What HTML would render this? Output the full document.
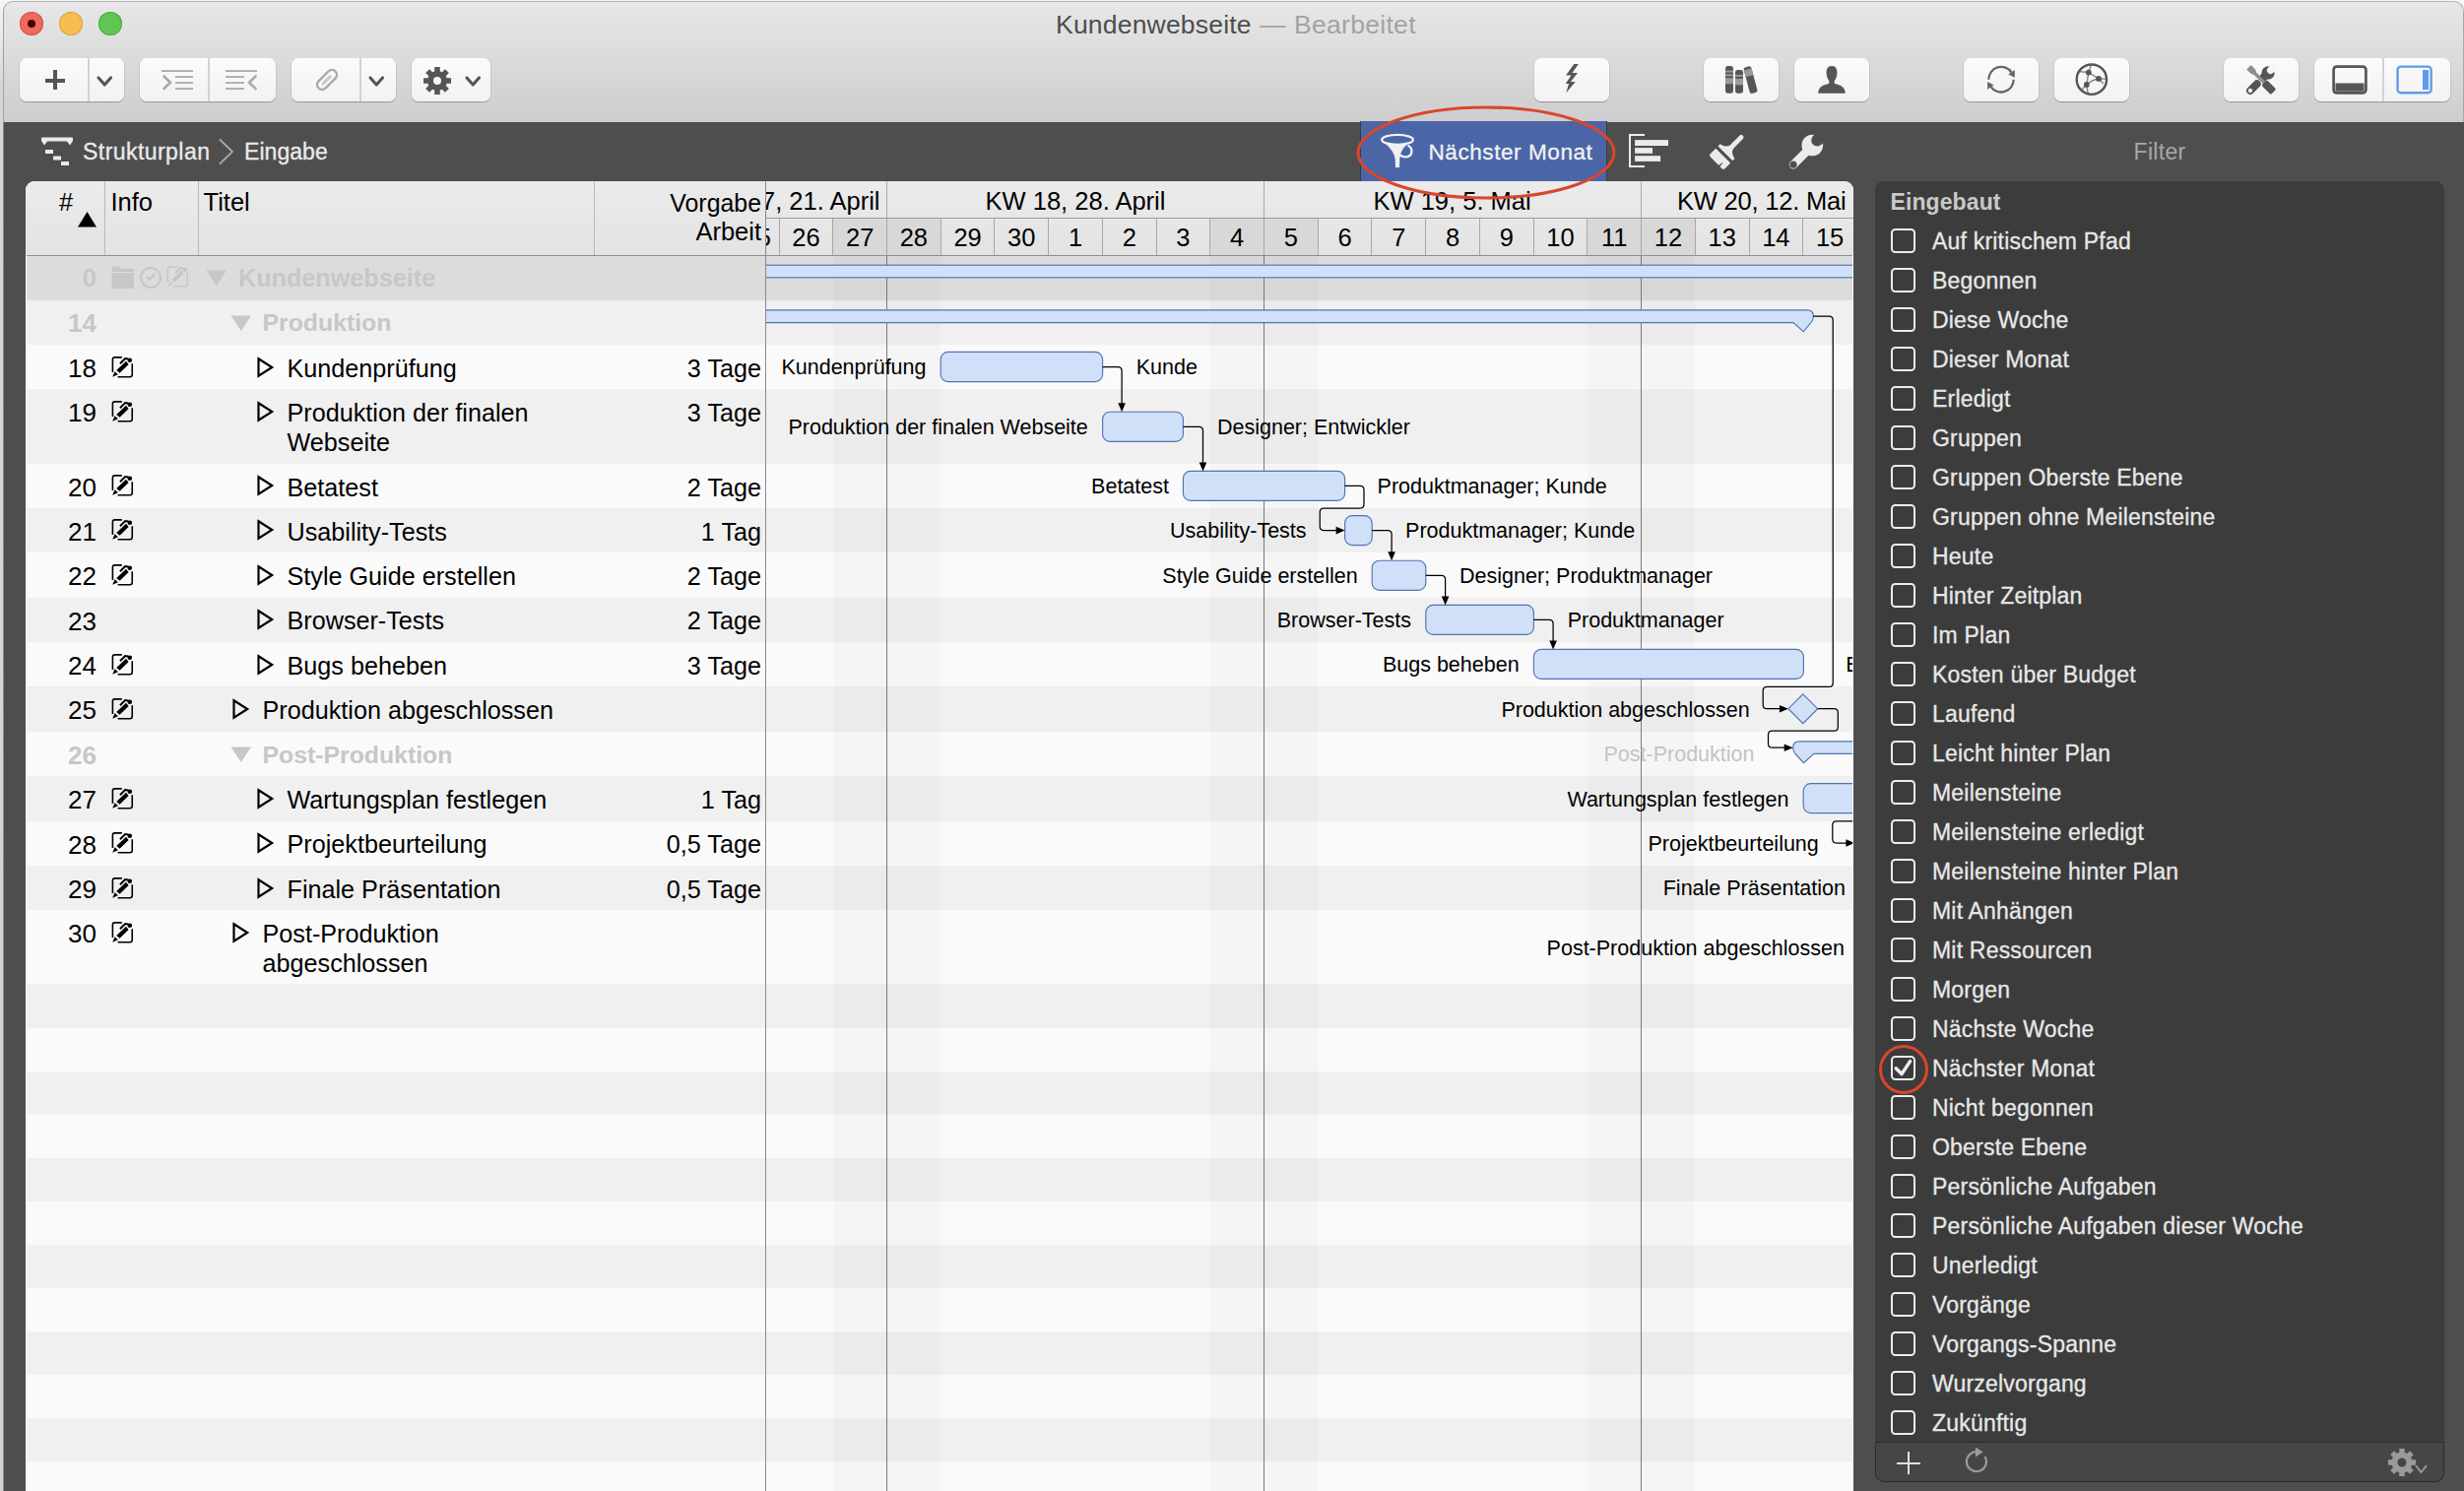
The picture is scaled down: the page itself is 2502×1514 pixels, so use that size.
<!DOCTYPE html><html><head><meta charset="utf-8"><style>
html,body{margin:0;padding:0;}
body{width:2502px;height:1514px;position:relative;overflow:hidden;background:#d6d6d6;font-family:"Liberation Sans",sans-serif;}
.t{position:absolute;white-space:nowrap;line-height:1;}
.r{position:absolute;}
.clip{position:absolute;overflow:hidden;}

</style></head><body>
<div class="r" style="left:0.00px;top:0.00px;width:2502.00px;height:1514.00px;background:linear-gradient(#f6f6f6 0px,#d6d6d6 90px,#d2d2d2 100%);"></div>
<div class="r" style="left:3.00px;top:1.00px;width:2499.00px;height:124.00px;background:linear-gradient(#e7e7e7,#cdcdcd);border-top:1px solid #b4b4b4;border-left:1px solid #a0a0a0;border-right:1px solid #a8a8a8;border-radius:10px 10px 0 0;box-sizing:border-box;"></div>
<div class="r" style="left:3.00px;top:124.00px;width:2499.00px;height:1390.00px;background:#4e4e4e;border-left:1px solid #8a8a8a;box-sizing:border-box;"></div>
<div class="r" style="left:20px;top:12px;width:24px;height:24px;border-radius:50%;background:#ee6a5e;box-shadow:inset 0 0 0 1px #d25447;"></div>
<div class="r" style="left:60px;top:12px;width:24px;height:24px;border-radius:50%;background:#f5be4f;box-shadow:inset 0 0 0 1px #d9a23d;"></div>
<div class="r" style="left:100px;top:12px;width:24px;height:24px;border-radius:50%;background:#61c554;box-shadow:inset 0 0 0 1px #4ea942;"></div>
<div class="r" style="left:28px;top:20px;width:8px;height:8px;border-radius:50%;background:#4a0002;"></div>
<div class="t" style="top:11.56px;font-size:26.5px;color:#4d4d4d;font-weight:normal;letter-spacing:0.2px;left:1072.00px;">Kundenwebseite</div>
<div class="t" style="top:11.56px;font-size:26.5px;color:#a3a3a3;font-weight:normal;left:1279.00px;">—</div>
<div class="t" style="top:11.56px;font-size:26.5px;color:#a3a3a3;font-weight:normal;letter-spacing:0.3px;left:1314.00px;">Bearbeitet</div>
<div class="r" style="left:20px;top:59px;width:106px;height:44px;box-sizing:border-box;border-radius:7px;background:linear-gradient(#fbfbfb,#f2f2f2);box-shadow:0 0.5px 0 0.5px rgba(0,0,0,0.12), 0 1px 1px rgba(0,0,0,0.18);"></div>
<div class="r" style="left:89.00px;top:59.00px;width:1.50px;height:44.00px;background:#d2d2d2;"></div>
<div class="r" style="left:142px;top:59px;width:138px;height:44px;box-sizing:border-box;border-radius:7px;background:linear-gradient(#fbfbfb,#f2f2f2);box-shadow:0 0.5px 0 0.5px rgba(0,0,0,0.12), 0 1px 1px rgba(0,0,0,0.18);"></div>
<div class="r" style="left:211.00px;top:59.00px;width:1.50px;height:44.00px;background:#d2d2d2;"></div>
<div class="r" style="left:296px;top:59px;width:106px;height:44px;box-sizing:border-box;border-radius:7px;background:linear-gradient(#fbfbfb,#f2f2f2);box-shadow:0 0.5px 0 0.5px rgba(0,0,0,0.12), 0 1px 1px rgba(0,0,0,0.18);"></div>
<div class="r" style="left:365.00px;top:59.00px;width:1.50px;height:44.00px;background:#d2d2d2;"></div>
<div class="r" style="left:418px;top:59px;width:80px;height:44px;box-sizing:border-box;border-radius:7px;background:linear-gradient(#fbfbfb,#f2f2f2);box-shadow:0 0.5px 0 0.5px rgba(0,0,0,0.12), 0 1px 1px rgba(0,0,0,0.18);"></div>
<div class="r" style="left:1558px;top:59px;width:76px;height:44px;box-sizing:border-box;border-radius:7px;background:linear-gradient(#fbfbfb,#f2f2f2);box-shadow:0 0.5px 0 0.5px rgba(0,0,0,0.12), 0 1px 1px rgba(0,0,0,0.18);"></div>
<div class="r" style="left:1730px;top:59px;width:76px;height:44px;box-sizing:border-box;border-radius:7px;background:linear-gradient(#fbfbfb,#f2f2f2);box-shadow:0 0.5px 0 0.5px rgba(0,0,0,0.12), 0 1px 1px rgba(0,0,0,0.18);"></div>
<div class="r" style="left:1822px;top:59px;width:76px;height:44px;box-sizing:border-box;border-radius:7px;background:linear-gradient(#fbfbfb,#f2f2f2);box-shadow:0 0.5px 0 0.5px rgba(0,0,0,0.12), 0 1px 1px rgba(0,0,0,0.18);"></div>
<div class="r" style="left:1994px;top:59px;width:76px;height:44px;box-sizing:border-box;border-radius:7px;background:linear-gradient(#fbfbfb,#f2f2f2);box-shadow:0 0.5px 0 0.5px rgba(0,0,0,0.12), 0 1px 1px rgba(0,0,0,0.18);"></div>
<div class="r" style="left:2086px;top:59px;width:76px;height:44px;box-sizing:border-box;border-radius:7px;background:linear-gradient(#fbfbfb,#f2f2f2);box-shadow:0 0.5px 0 0.5px rgba(0,0,0,0.12), 0 1px 1px rgba(0,0,0,0.18);"></div>
<div class="r" style="left:2258px;top:59px;width:76px;height:44px;box-sizing:border-box;border-radius:7px;background:linear-gradient(#fbfbfb,#f2f2f2);box-shadow:0 0.5px 0 0.5px rgba(0,0,0,0.12), 0 1px 1px rgba(0,0,0,0.18);"></div>
<div class="r" style="left:2350px;top:59px;width:138px;height:44px;box-sizing:border-box;border-radius:7px;background:linear-gradient(#fbfbfb,#f2f2f2);box-shadow:0 0.5px 0 0.5px rgba(0,0,0,0.12), 0 1px 1px rgba(0,0,0,0.18);"></div>
<div class="r" style="left:2419.00px;top:59.00px;width:1.50px;height:44.00px;background:#d2d2d2;"></div>
<div class="r" style="left:45.50px;top:79.50px;width:20.00px;height:4.50px;background:#555555;"></div>
<div class="r" style="left:53.50px;top:71.00px;width:4.50px;height:20.00px;background:#555555;"></div>
<svg class="r" style="left:96.75px;top:75.50px;" width="18.5" height="13" viewBox="0 0 18.5 13"><polyline points="3,3 9.25,10 15.5,3" fill="none" stroke="#555555" stroke-width="3.1" stroke-linecap="round" stroke-linejoin="round"/></svg>
<svg class="r" style="left:372.75px;top:75.50px;" width="18.5" height="13" viewBox="0 0 18.5 13"><polyline points="3,3 9.25,10 15.5,3" fill="none" stroke="#555555" stroke-width="3.1" stroke-linecap="round" stroke-linejoin="round"/></svg>
<svg class="r" style="left:471.25px;top:75.50px;" width="18.5" height="13" viewBox="0 0 18.5 13"><polyline points="3,3 9.25,10 15.5,3" fill="none" stroke="#555555" stroke-width="3.1" stroke-linecap="round" stroke-linejoin="round"/></svg>
<svg class="r" style="left:160.00px;top:68.00px;" width="40" height="28" viewBox="0 0 40 28"><rect x="4" y="3.2" width="32" height="1.8" fill="#a9a9a9"/><rect x="18" y="9.2" width="18" height="1.8" fill="#a9a9a9"/><rect x="18" y="15.2" width="18" height="1.8" fill="#a9a9a9"/><rect x="18" y="21.2" width="18" height="1.8" fill="#a9a9a9"/><polyline points="6.5,9.5 13,15.8 6.5,22" fill="none" stroke="#a9a9a9" stroke-width="2.6" stroke-linecap="round"/></svg>
<svg class="r" style="left:226.00px;top:68.00px;" width="40" height="28" viewBox="0 0 40 28"><rect x="3" y="3.2" width="32" height="1.8" fill="#a9a9a9"/><rect x="3" y="9.2" width="19" height="1.8" fill="#a9a9a9"/><rect x="3" y="15.2" width="19" height="1.8" fill="#a9a9a9"/><rect x="3" y="21.2" width="19" height="1.8" fill="#a9a9a9"/><polyline points="33.5,9.5 27,15.8 33.5,22" fill="none" stroke="#a9a9a9" stroke-width="2.6" stroke-linecap="round"/></svg>
<svg class="r" style="left:316.00px;top:66.00px;" width="32" height="30" viewBox="0 0 32 30"><g transform="rotate(-45 16 15)"><rect x="4" y="10" width="24" height="10" rx="5" fill="none" stroke="#a9a9a9" stroke-width="2.4"/><rect x="9" y="13.5" width="13" height="3" rx="1.5" fill="#c8c8c8"/></g></svg>
<svg class="r" style="left:429.00px;top:67.00px;" width="30" height="30" viewBox="0 0 30 30"><circle cx="15" cy="15" r="10" fill="#555555"/><rect x="12.25" y="1" width="5.5" height="14" fill="#555555" transform="rotate(0.0 15 15)"/><rect x="12.25" y="1" width="5.5" height="14" fill="#555555" transform="rotate(45.0 15 15)"/><rect x="12.25" y="1" width="5.5" height="14" fill="#555555" transform="rotate(90.0 15 15)"/><rect x="12.25" y="1" width="5.5" height="14" fill="#555555" transform="rotate(135.0 15 15)"/><rect x="12.25" y="1" width="5.5" height="14" fill="#555555" transform="rotate(180.0 15 15)"/><rect x="12.25" y="1" width="5.5" height="14" fill="#555555" transform="rotate(225.0 15 15)"/><rect x="12.25" y="1" width="5.5" height="14" fill="#555555" transform="rotate(270.0 15 15)"/><rect x="12.25" y="1" width="5.5" height="14" fill="#555555" transform="rotate(315.0 15 15)"/><circle cx="15" cy="15" r="4" fill="#f6f6f6"/></svg>
<svg class="r" style="left:1580.00px;top:60.00px;" width="30" height="40" viewBox="0 0 30 40"><path d="M18.3,5.1 L22.9,5.1 L16.4,14 L21.9,14 L14.9,23.1 L19.7,23.1 L10.3,34.3 L13,25 L9.7,25 L15.5,16.4 L10,16.4 Z" fill="#555555"/></svg>
<svg class="r" style="left:1750.00px;top:60.00px;" width="40" height="40" viewBox="0 0 40 40"><rect x="2" y="7.1" width="8" height="27.6" rx="2.6" fill="#555555"/><rect x="12" y="11" width="8" height="23.7" rx="2.6" fill="#555555"/><rect x="2" y="11.6" width="8" height="1.9" fill="#9a9a9a"/><rect x="2" y="15.4" width="8" height="1.9" fill="#9a9a9a"/><rect x="2" y="19.2" width="8" height="6" fill="#9a9a9a"/><rect x="12" y="15.9" width="8" height="1.9" fill="#9a9a9a"/><rect x="12" y="19.8" width="8" height="6.5" fill="#9a9a9a"/><g transform="rotate(-15 27.5 21)"><rect x="23.5" y="7.3" width="8" height="27.6" rx="2.6" fill="#555555"/><rect x="23.5" y="10" width="8" height="7" fill="#9a9a9a"/></g></svg>
<svg class="r" style="left:1844.00px;top:60.00px;" width="32" height="40" viewBox="0 0 32 40"><path d="M16,7 C11.6,7 10.4,10.5 10.6,14.5 C10.8,18 12,20.5 13.3,22.2 L13.3,24.8 C7.5,26.5 2.3,27.8 2.3,34.7 L29.7,34.7 C29.7,27.8 24.5,26.5 18.7,24.8 L18.7,22.2 C20,20.5 21.2,18 21.4,14.5 C21.6,10.5 20.4,7 16,7 Z" fill="#555555"/></svg>
<svg class="r" style="left:2010.00px;top:60.00px;" width="44" height="42" viewBox="0 0 44 42"><path d="M9.3,20.7 A12.7,12.7 0 0 1 32.6,13.6" fill="none" stroke="#666" stroke-width="2.3"/><path d="M34.7,20.7 A12.7,12.7 0 0 1 11.4,27.8" fill="none" stroke="#666" stroke-width="2.3"/><path d="M35.9,10.9 L35.9,18.7 L29.2,15.6 Z" fill="#666"/><path d="M8.1,23.1 L8.1,30.9 L14.6,26.2 Z" fill="#666"/></svg>
<svg class="r" style="left:2100.00px;top:60.00px;" width="48" height="42" viewBox="0 0 48 42"><path d="M20.8,13.6 L23.4,6 M20.8,13.6 L12,12.8 M20.8,13.6 L31,19.9 M20.8,13.6 L18.8,25.9 M31,19.9 L38,19.9 M31,19.9 L36,25 M18.8,25.9 Q24,21 31,19.9 M18.8,25.9 L20.2,35 M18.8,25.9 L14,31" stroke="#8a8a8a" stroke-width="1.5" fill="none"/><circle cx="23.9" cy="20.7" r="15.2" fill="none" stroke="#555555" stroke-width="2.4"/><circle cx="20.8" cy="13.6" r="2.9" fill="#555555"/><circle cx="31" cy="19.9" r="2.9" fill="#555555"/><circle cx="18.8" cy="25.9" r="2.9" fill="#555555"/></svg>
<svg class="r" style="left:2270.00px;top:60.00px;" width="50" height="40" viewBox="0 0 50 40"><g transform="translate(15,32) rotate(-45)"><rect x="-3.9" y="-3.9" width="17.4" height="7.8" rx="3.9" fill="#555555"/><circle cx="0" cy="0" r="2.1" fill="#f7f7f7"/><rect x="15.8" y="-4" width="7" height="8" fill="#555555"/><circle cx="25.5" cy="0" r="6.6" fill="#555555"/><circle cx="29" cy="0" r="3.6" fill="#f7f7f7"/><rect x="29" y="-3.6" width="8" height="7.2" fill="#f7f7f7"/></g><g transform="translate(13.5,8.3) rotate(45)"><path d="M0,-2.9 Q0,-3.1 1,-3.1 L6.5,-3.1 L9,-1.8 L23,-1.8 L23,1.8 L9,1.8 L6.5,3.1 L1,3.1 Q0,3.1 0,2.9 Z" fill="#8e8e8e"/><rect x="22" y="-3.9" width="13.5" height="7.8" rx="1.6" fill="#555555"/></g></svg>
<svg class="r" style="left:2368.00px;top:66.00px;" width="36" height="30" viewBox="0 0 36 30"><rect x="1.6" y="1.6" width="32.8" height="26.8" rx="3.2" fill="none" stroke="#555555" stroke-width="2.7"/><rect x="3.5" y="18.5" width="29" height="8.2" fill="#555555"/></svg>
<svg class="r" style="left:2433.00px;top:66.00px;" width="38" height="30" viewBox="0 0 38 30"><rect x="1.6" y="1.6" width="34" height="26.6" rx="3.2" fill="none" stroke="#5d9cec" stroke-width="2.4"/><rect x="27" y="5" width="6" height="20" fill="#5d9cec"/></svg>
<svg class="r" style="left:40.00px;top:138.00px;" width="36" height="32" viewBox="0 0 36 32"><path d="M2,2.5 Q2,1.5 3,1.5 L33,1.5 Q34,1.5 34,2.5 L34,5 L31,9.5 L28,5.5 L8,5.5 L5,9.5 L2,5 Z" fill="#ebebeb"/><rect x="6" y="14" width="8" height="4" fill="#ebebeb"/><rect x="14" y="20.5" width="8" height="4" fill="#ebebeb"/><rect x="22" y="26" width="8" height="4" fill="#ebebeb"/></svg>
<div class="t" style="top:142.53px;font-size:23px;color:#ebebeb;font-weight:normal;letter-spacing:0.45px;left:84.00px;-webkit-text-stroke:0.3px #ebebeb;">Strukturplan</div>
<svg class="r" style="left:221.00px;top:140.00px;" width="18" height="28" viewBox="0 0 18 28"><polyline points="2,1.5 15,14 2,26.5" fill="none" stroke="#a8a8a8" stroke-width="1.8"/></svg>
<div class="t" style="top:142.53px;font-size:23px;color:#ebebeb;font-weight:normal;letter-spacing:0.05px;left:248.00px;-webkit-text-stroke:0.3px #ebebeb;">Eingabe</div>
<div class="r" style="left:1382.00px;top:123.00px;width:249.00px;height:61.00px;background:#4a66a6;box-shadow:-1px 0 0 #3a3a3a, 1px 0 0 #3a3a3a;"></div>
<svg class="r" style="left:1395.00px;top:128.00px;" width="50" height="50" viewBox="0 0 50 50"><path d="M8.5,15 C12,18 20,19.5 24,19.3 C29,19.3 33,18.2 36,16.8 C31,21 27,25 26.3,33 L26.1,42 L21.9,42 L21.7,33.5 C20.5,25 14,20 8.5,15 Z" fill="#f0f0f0"/><ellipse cx="24" cy="13.9" rx="15.8" ry="5" fill="none" stroke="#f0f0f0" stroke-width="2.3"/><path d="M34.5,19.8 C39.8,22 39.8,30 34,31.2 C31,31.8 28.5,31 26.5,29.5" fill="none" stroke="#f0f0f0" stroke-width="2.3"/></svg>
<div class="t" style="top:144.45px;font-size:22.5px;color:#f2f2f2;font-weight:normal;letter-spacing:0.58px;left:1450.50px;-webkit-text-stroke:0.3px #f2f2f2;">Nächster Monat</div>
<svg class="r" style="left:1645.00px;top:128.00px;" width="60" height="50" viewBox="0 0 60 50"><path d="M25,9 L10,9 L10,40.9 L25,40.9" fill="none" stroke="#ededed" stroke-width="2"/><rect x="15.1" y="14.1" width="33.9" height="5.9" fill="#ebebeb"/><rect x="15.1" y="22.1" width="17.9" height="5.7" fill="#ebebeb"/><rect x="15.1" y="30.2" width="26" height="5.7" fill="#ebebeb"/></svg>
<svg class="r" style="left:1725.00px;top:128.00px;" width="56" height="50" viewBox="0 0 56 50"><g transform="translate(27.5,27) rotate(45)" fill="#ebebeb"><rect x="-2.4" y="-24.5" width="4.8" height="17" rx="2.4"/><path d="M-2.4,-9 Q-3,-3.5 -10.3,-2 L-10.3,1 L10.6,1 L10.6,-2 Q3,-3.5 2.4,-9 Z"/><path d="M-10.3,4.2 L10.8,4.2 L10.8,11.8 Q10.8,14.3 8.3,14.3 L5.8,14.3 L4.9,8.5 L3.9,14.3 L-7.8,14.3 Q-10.3,14.3 -10.3,11.8 Z"/></g></svg>
<svg class="r" style="left:1800.00px;top:128.00px;" width="60" height="50" viewBox="0 0 60 50"><path d="M21,39.2 L37,23.2" stroke="#ebebeb" stroke-width="8.4" stroke-linecap="round"/><circle cx="40.3" cy="19.5" r="10.8" fill="#ebebeb"/><circle cx="21" cy="39.2" r="3.6" fill="#4e4e4e"/><circle cx="45.2" cy="14.6" r="6" fill="#4e4e4e"/><path d="M45.2,14.6 L56,3.8" stroke="#4e4e4e" stroke-width="12"/></svg>
<div class="t" style="top:142.53px;font-size:23px;color:#a8a8a8;font-weight:normal;letter-spacing:0.3px;left:1193.00px;width:2000px;text-align:center;">Filter</div>
<div class="clip" style="left:26px;top:184px;width:1856px;height:1340px;border-radius:9px 9px 0 0;background:#fafafa;">
<div class="r" style="left:0.00px;top:75.00px;width:1856.00px;height:45.80px;background:#dcdcdc;"></div>
<div class="r" style="left:0.00px;top:120.80px;width:1856.00px;height:45.20px;background:#f0f0f0;"></div>
<div class="r" style="left:0.00px;top:166.00px;width:1856.00px;height:45.00px;background:#fafafa;"></div>
<div class="r" style="left:0.00px;top:211.00px;width:1856.00px;height:75.70px;background:#f0f0f0;"></div>
<div class="r" style="left:0.00px;top:286.70px;width:1856.00px;height:45.10px;background:#fafafa;"></div>
<div class="r" style="left:0.00px;top:331.80px;width:1856.00px;height:45.40px;background:#f0f0f0;"></div>
<div class="r" style="left:0.00px;top:377.20px;width:1856.00px;height:45.40px;background:#fafafa;"></div>
<div class="r" style="left:0.00px;top:422.60px;width:1856.00px;height:45.40px;background:#f0f0f0;"></div>
<div class="r" style="left:0.00px;top:468.00px;width:1856.00px;height:45.00px;background:#fafafa;"></div>
<div class="r" style="left:0.00px;top:513.00px;width:1856.00px;height:45.60px;background:#f0f0f0;"></div>
<div class="r" style="left:0.00px;top:558.60px;width:1856.00px;height:45.40px;background:#fafafa;"></div>
<div class="r" style="left:0.00px;top:604.00px;width:1856.00px;height:45.60px;background:#f0f0f0;"></div>
<div class="r" style="left:0.00px;top:649.60px;width:1856.00px;height:45.40px;background:#fafafa;"></div>
<div class="r" style="left:0.00px;top:695.00px;width:1856.00px;height:45.00px;background:#f0f0f0;"></div>
<div class="r" style="left:0.00px;top:740.00px;width:1856.00px;height:75.00px;background:#fafafa;"></div>
<div class="r" style="left:0.00px;top:815.00px;width:1856.00px;height:45.00px;background:#f0f0f0;"></div>
<div class="r" style="left:0.00px;top:860.00px;width:1856.00px;height:44.00px;background:#fafafa;"></div>
<div class="r" style="left:0.00px;top:904.00px;width:1856.00px;height:44.00px;background:#f0f0f0;"></div>
<div class="r" style="left:0.00px;top:948.00px;width:1856.00px;height:44.00px;background:#fafafa;"></div>
<div class="r" style="left:0.00px;top:992.00px;width:1856.00px;height:44.00px;background:#f0f0f0;"></div>
<div class="r" style="left:0.00px;top:1036.00px;width:1856.00px;height:44.00px;background:#fafafa;"></div>
<div class="r" style="left:0.00px;top:1080.00px;width:1856.00px;height:44.00px;background:#f0f0f0;"></div>
<div class="r" style="left:0.00px;top:1124.00px;width:1856.00px;height:44.00px;background:#fafafa;"></div>
<div class="r" style="left:0.00px;top:1168.00px;width:1856.00px;height:44.00px;background:#f0f0f0;"></div>
<div class="r" style="left:0.00px;top:1212.00px;width:1856.00px;height:44.00px;background:#fafafa;"></div>
<div class="r" style="left:0.00px;top:1256.00px;width:1856.00px;height:44.00px;background:#f0f0f0;"></div>
<div class="r" style="left:0.00px;top:1300.00px;width:1856.00px;height:44.00px;background:#fafafa;"></div>
<div class="r" style="left:819.78px;top:75.00px;width:109.44px;height:1255.00px;background:rgba(0,0,0,0.018);"></div>
<div class="r" style="left:1202.82px;top:75.00px;width:109.44px;height:1255.00px;background:rgba(0,0,0,0.018);"></div>
<div class="r" style="left:1585.86px;top:75.00px;width:109.44px;height:1255.00px;background:rgba(0,0,0,0.018);"></div>
<div class="r" style="left:874.00px;top:75.00px;width:1.00px;height:1255.00px;background:#787878;"></div>
<div class="r" style="left:1257.04px;top:75.00px;width:1.00px;height:1255.00px;background:#787878;"></div>
<div class="r" style="left:1640.08px;top:75.00px;width:1.00px;height:1255.00px;background:#787878;"></div>
<div class="r" style="left:0.00px;top:0.00px;width:1856.00px;height:75.00px;background:linear-gradient(#ebebeb,#e3e3e3);"></div>
<div class="r" style="left:0.00px;top:74.50px;width:1856.00px;height:1.20px;background:#8e8e8e;"></div>
<div class="r" style="left:80.00px;top:0.00px;width:1.00px;height:75.00px;background:#b9b9b9;"></div>
<div class="r" style="left:175.00px;top:0.00px;width:1.00px;height:75.00px;background:#b9b9b9;"></div>
<div class="r" style="left:577.00px;top:0.00px;width:1.00px;height:75.00px;background:#b9b9b9;"></div>
<div class="r" style="left:751.00px;top:0.00px;width:1.20px;height:1330.00px;background:#8a8a8a;"></div>
<div class="r" style="left:752.00px;top:36.50px;width:1104.00px;height:1.20px;background:#9a9a9a;"></div>
<div class="r" style="left:819.78px;top:37.50px;width:54.72px;height:37.00px;background:#d8d8d8;"></div>
<div class="r" style="left:874.50px;top:37.50px;width:54.72px;height:37.00px;background:#d8d8d8;"></div>
<div class="r" style="left:1202.82px;top:37.50px;width:54.72px;height:37.00px;background:#d8d8d8;"></div>
<div class="r" style="left:1257.54px;top:37.50px;width:54.72px;height:37.00px;background:#d8d8d8;"></div>
<div class="r" style="left:1585.86px;top:37.50px;width:54.72px;height:37.00px;background:#d8d8d8;"></div>
<div class="r" style="left:1640.58px;top:37.50px;width:54.72px;height:37.00px;background:#d8d8d8;"></div>
<div class="r" style="left:764.56px;top:37.50px;width:1.00px;height:37.00px;background:#a8a8a8;"></div>
<div class="r" style="left:819.28px;top:37.50px;width:1.00px;height:37.00px;background:#a8a8a8;"></div>
<div class="r" style="left:874.00px;top:37.50px;width:1.00px;height:37.00px;background:#a8a8a8;"></div>
<div class="r" style="left:928.72px;top:37.50px;width:1.00px;height:37.00px;background:#a8a8a8;"></div>
<div class="r" style="left:983.44px;top:37.50px;width:1.00px;height:37.00px;background:#a8a8a8;"></div>
<div class="r" style="left:1038.16px;top:37.50px;width:1.00px;height:37.00px;background:#a8a8a8;"></div>
<div class="r" style="left:1092.88px;top:37.50px;width:1.00px;height:37.00px;background:#a8a8a8;"></div>
<div class="r" style="left:1147.60px;top:37.50px;width:1.00px;height:37.00px;background:#a8a8a8;"></div>
<div class="r" style="left:1202.32px;top:37.50px;width:1.00px;height:37.00px;background:#a8a8a8;"></div>
<div class="r" style="left:1257.04px;top:37.50px;width:1.00px;height:37.00px;background:#a8a8a8;"></div>
<div class="r" style="left:1311.76px;top:37.50px;width:1.00px;height:37.00px;background:#a8a8a8;"></div>
<div class="r" style="left:1366.48px;top:37.50px;width:1.00px;height:37.00px;background:#a8a8a8;"></div>
<div class="r" style="left:1421.20px;top:37.50px;width:1.00px;height:37.00px;background:#a8a8a8;"></div>
<div class="r" style="left:1475.92px;top:37.50px;width:1.00px;height:37.00px;background:#a8a8a8;"></div>
<div class="r" style="left:1530.64px;top:37.50px;width:1.00px;height:37.00px;background:#a8a8a8;"></div>
<div class="r" style="left:1585.36px;top:37.50px;width:1.00px;height:37.00px;background:#a8a8a8;"></div>
<div class="r" style="left:1640.08px;top:37.50px;width:1.00px;height:37.00px;background:#a8a8a8;"></div>
<div class="r" style="left:1694.80px;top:37.50px;width:1.00px;height:37.00px;background:#a8a8a8;"></div>
<div class="r" style="left:1749.52px;top:37.50px;width:1.00px;height:37.00px;background:#a8a8a8;"></div>
<div class="r" style="left:1804.24px;top:37.50px;width:1.00px;height:37.00px;background:#a8a8a8;"></div>
<div class="r" style="left:874.00px;top:0.00px;width:1.00px;height:37.00px;background:#a8a8a8;"></div>
<div class="r" style="left:1257.04px;top:0.00px;width:1.00px;height:37.00px;background:#a8a8a8;"></div>
<div class="r" style="left:1640.08px;top:0.00px;width:1.00px;height:37.00px;background:#a8a8a8;"></div>
<div class="t" style="top:9.41px;font-size:25.5px;color:#000;font-weight:normal;left:34.00px;">#</div>
<svg class="r" style="left:52.00px;top:30.00px;" width="22" height="18" viewBox="0 0 22 18"><path d="M1,16.5 L10.5,1 L20,16.5 Z" fill="#000"/></svg>
<div class="t" style="top:9.41px;font-size:25.5px;color:#000;font-weight:normal;left:86.50px;">Info</div>
<div class="t" style="top:9.41px;font-size:25.5px;color:#000;font-weight:normal;left:180.50px;">Titel</div>
<div class="t" style="top:9.92px;font-size:24.9px;color:#000;font-weight:normal;right:1109.00px;text-align:right;">Vorgabe</div>
<div class="t" style="top:38.91px;font-size:25.5px;color:#000;font-weight:normal;right:1109.00px;text-align:right;">Arbeit</div>
<div class="t" style="top:85.49px;font-size:26px;color:#c7c7c7;font-weight:bold;right:1784.00px;text-align:right;">0</div>
<svg class="r" style="left:87.00px;top:86.00px;" width="24" height="24" viewBox="0 0 24 24"><path d="M0.5,3 L0.5,1.5 Q0.5,0.5 1.5,0.5 L8,0.5 L10,3 L23,3 L23,6 L0.5,6 Z" fill="#c7c7c7"/><rect x="0.5" y="7" width="22.5" height="16" fill="#c7c7c7"/></svg>
<svg class="r" style="left:115.00px;top:86.00px;" width="24" height="24" viewBox="0 0 24 24"><circle cx="12" cy="12" r="10" fill="none" stroke="#c7c7c7" stroke-width="2"/><polyline points="8,11 11,14 16,8" fill="none" stroke="#c7c7c7" stroke-width="2"/></svg>
<svg class="r" style="left:143.00px;top:86.00px;" width="24" height="24" viewBox="0 0 24 24"><path d="M10.8,0.9 L3.5,0.9 Q1.4,0.9 1.4,3 L1.4,16" fill="none" stroke="#c7c7c7" stroke-width="1.6"/><path d="M6.6,20.8 L19,20.8 Q21.25,20.8 21.25,18.6 L21.25,7.35" fill="none" stroke="#c7c7c7" stroke-width="1.6"/><path d="M1.2,20.8 L3.6,15.3 L6.9,18.2 Z" fill="#c7c7c7"/><path d="M5.2,14 L15,4.8 L17.6,7.9 L8.6,16.8 Z" fill="#c7c7c7"/><path d="M8.9,7.2 L14.1,2.1 L17.3,2.5" fill="none" stroke="#c7c7c7" stroke-width="1.9"/><circle cx="18.8" cy="3.8" r="2.3" fill="#c7c7c7"/></svg>
<svg class="r" style="left:183.00px;top:90.00px;" width="22" height="17" viewBox="0 0 22 17"><path d="M0.5,0.5 L21,0.5 L10.75,16 Z" fill="#c7c7c7"/></svg>
<div class="t" style="top:86.16px;font-size:25.2px;color:#c7c7c7;font-weight:bold;left:216.00px;">Kundenwebseite</div>
<div class="t" style="top:130.99px;font-size:26px;color:#c7c7c7;font-weight:bold;right:1784.00px;text-align:right;">14</div>
<svg class="r" style="left:208.00px;top:136.00px;" width="22" height="17" viewBox="0 0 22 17"><path d="M0.5,0.5 L21,0.5 L10.75,16 Z" fill="#c7c7c7"/></svg>
<div class="t" style="top:132.00px;font-size:24.8px;color:#c7c7c7;font-weight:bold;left:240.50px;">Produktion</div>
<div class="t" style="top:177.19px;font-size:26px;color:#000;font-weight:normal;right:1784.00px;text-align:right;">18</div>
<svg class="r" style="left:86.50px;top:177.50px;" width="24" height="24" viewBox="0 0 24 24"><path d="M10.8,0.9 L3.5,0.9 Q1.4,0.9 1.4,3 L1.4,16" fill="none" stroke="#000" stroke-width="1.6"/><path d="M6.6,20.8 L19,20.8 Q21.25,20.8 21.25,18.6 L21.25,7.35" fill="none" stroke="#000" stroke-width="1.6"/><path d="M1.2,20.8 L3.6,15.3 L6.9,18.2 Z" fill="#000"/><path d="M5.2,14 L15,4.8 L17.6,7.9 L8.6,16.8 Z" fill="#000"/><path d="M8.9,7.2 L14.1,2.1 L17.3,2.5" fill="none" stroke="#000" stroke-width="1.9"/><circle cx="18.8" cy="3.8" r="2.3" fill="#000"/></svg>
<svg class="r" style="left:235.00px;top:177.50px;" width="19" height="23" viewBox="0 0 19 23"><path d="M1.5,2.3 L15.2,11 L1.5,19.7 Z" fill="none" stroke="#000" stroke-width="2.2" stroke-linejoin="miter"/></svg>
<div class="t" style="top:177.86px;font-size:25.2px;color:#000;font-weight:normal;left:265.50px;">Kundenprüfung</div>
<div class="t" style="top:177.86px;font-size:25.2px;color:#000;font-weight:normal;right:1109.00px;text-align:right;">3 Tage</div>
<div class="t" style="top:222.19px;font-size:26px;color:#000;font-weight:normal;right:1784.00px;text-align:right;">19</div>
<svg class="r" style="left:86.50px;top:222.50px;" width="24" height="24" viewBox="0 0 24 24"><path d="M10.8,0.9 L3.5,0.9 Q1.4,0.9 1.4,3 L1.4,16" fill="none" stroke="#000" stroke-width="1.6"/><path d="M6.6,20.8 L19,20.8 Q21.25,20.8 21.25,18.6 L21.25,7.35" fill="none" stroke="#000" stroke-width="1.6"/><path d="M1.2,20.8 L3.6,15.3 L6.9,18.2 Z" fill="#000"/><path d="M5.2,14 L15,4.8 L17.6,7.9 L8.6,16.8 Z" fill="#000"/><path d="M8.9,7.2 L14.1,2.1 L17.3,2.5" fill="none" stroke="#000" stroke-width="1.9"/><circle cx="18.8" cy="3.8" r="2.3" fill="#000"/></svg>
<svg class="r" style="left:235.00px;top:222.50px;" width="19" height="23" viewBox="0 0 19 23"><path d="M1.5,2.3 L15.2,11 L1.5,19.7 Z" fill="none" stroke="#000" stroke-width="2.2" stroke-linejoin="miter"/></svg>
<div class="t" style="top:222.86px;font-size:25.2px;color:#000;font-weight:normal;left:265.50px;">Produktion der finalen</div>
<div class="t" style="top:252.86px;font-size:25.2px;color:#000;font-weight:normal;left:265.50px;">Webseite</div>
<div class="t" style="top:222.86px;font-size:25.2px;color:#000;font-weight:normal;right:1109.00px;text-align:right;">3 Tage</div>
<div class="t" style="top:297.89px;font-size:26px;color:#000;font-weight:normal;right:1784.00px;text-align:right;">20</div>
<svg class="r" style="left:86.50px;top:298.20px;" width="24" height="24" viewBox="0 0 24 24"><path d="M10.8,0.9 L3.5,0.9 Q1.4,0.9 1.4,3 L1.4,16" fill="none" stroke="#000" stroke-width="1.6"/><path d="M6.6,20.8 L19,20.8 Q21.25,20.8 21.25,18.6 L21.25,7.35" fill="none" stroke="#000" stroke-width="1.6"/><path d="M1.2,20.8 L3.6,15.3 L6.9,18.2 Z" fill="#000"/><path d="M5.2,14 L15,4.8 L17.6,7.9 L8.6,16.8 Z" fill="#000"/><path d="M8.9,7.2 L14.1,2.1 L17.3,2.5" fill="none" stroke="#000" stroke-width="1.9"/><circle cx="18.8" cy="3.8" r="2.3" fill="#000"/></svg>
<svg class="r" style="left:235.00px;top:298.20px;" width="19" height="23" viewBox="0 0 19 23"><path d="M1.5,2.3 L15.2,11 L1.5,19.7 Z" fill="none" stroke="#000" stroke-width="2.2" stroke-linejoin="miter"/></svg>
<div class="t" style="top:298.56px;font-size:25.2px;color:#000;font-weight:normal;left:265.50px;">Betatest</div>
<div class="t" style="top:298.56px;font-size:25.2px;color:#000;font-weight:normal;right:1109.00px;text-align:right;">2 Tage</div>
<div class="t" style="top:342.99px;font-size:26px;color:#000;font-weight:normal;right:1784.00px;text-align:right;">21</div>
<svg class="r" style="left:86.50px;top:343.30px;" width="24" height="24" viewBox="0 0 24 24"><path d="M10.8,0.9 L3.5,0.9 Q1.4,0.9 1.4,3 L1.4,16" fill="none" stroke="#000" stroke-width="1.6"/><path d="M6.6,20.8 L19,20.8 Q21.25,20.8 21.25,18.6 L21.25,7.35" fill="none" stroke="#000" stroke-width="1.6"/><path d="M1.2,20.8 L3.6,15.3 L6.9,18.2 Z" fill="#000"/><path d="M5.2,14 L15,4.8 L17.6,7.9 L8.6,16.8 Z" fill="#000"/><path d="M8.9,7.2 L14.1,2.1 L17.3,2.5" fill="none" stroke="#000" stroke-width="1.9"/><circle cx="18.8" cy="3.8" r="2.3" fill="#000"/></svg>
<svg class="r" style="left:235.00px;top:343.30px;" width="19" height="23" viewBox="0 0 19 23"><path d="M1.5,2.3 L15.2,11 L1.5,19.7 Z" fill="none" stroke="#000" stroke-width="2.2" stroke-linejoin="miter"/></svg>
<div class="t" style="top:343.66px;font-size:25.2px;color:#000;font-weight:normal;left:265.50px;">Usability-Tests</div>
<div class="t" style="top:343.66px;font-size:25.2px;color:#000;font-weight:normal;right:1109.00px;text-align:right;">1 Tag</div>
<div class="t" style="top:388.39px;font-size:26px;color:#000;font-weight:normal;right:1784.00px;text-align:right;">22</div>
<svg class="r" style="left:86.50px;top:388.70px;" width="24" height="24" viewBox="0 0 24 24"><path d="M10.8,0.9 L3.5,0.9 Q1.4,0.9 1.4,3 L1.4,16" fill="none" stroke="#000" stroke-width="1.6"/><path d="M6.6,20.8 L19,20.8 Q21.25,20.8 21.25,18.6 L21.25,7.35" fill="none" stroke="#000" stroke-width="1.6"/><path d="M1.2,20.8 L3.6,15.3 L6.9,18.2 Z" fill="#000"/><path d="M5.2,14 L15,4.8 L17.6,7.9 L8.6,16.8 Z" fill="#000"/><path d="M8.9,7.2 L14.1,2.1 L17.3,2.5" fill="none" stroke="#000" stroke-width="1.9"/><circle cx="18.8" cy="3.8" r="2.3" fill="#000"/></svg>
<svg class="r" style="left:235.00px;top:388.70px;" width="19" height="23" viewBox="0 0 19 23"><path d="M1.5,2.3 L15.2,11 L1.5,19.7 Z" fill="none" stroke="#000" stroke-width="2.2" stroke-linejoin="miter"/></svg>
<div class="t" style="top:389.06px;font-size:25.2px;color:#000;font-weight:normal;left:265.50px;">Style Guide erstellen</div>
<div class="t" style="top:389.06px;font-size:25.2px;color:#000;font-weight:normal;right:1109.00px;text-align:right;">2 Tage</div>
<div class="t" style="top:433.79px;font-size:26px;color:#000;font-weight:normal;right:1784.00px;text-align:right;">23</div>
<svg class="r" style="left:235.00px;top:434.10px;" width="19" height="23" viewBox="0 0 19 23"><path d="M1.5,2.3 L15.2,11 L1.5,19.7 Z" fill="none" stroke="#000" stroke-width="2.2" stroke-linejoin="miter"/></svg>
<div class="t" style="top:434.46px;font-size:25.2px;color:#000;font-weight:normal;left:265.50px;">Browser-Tests</div>
<div class="t" style="top:434.46px;font-size:25.2px;color:#000;font-weight:normal;right:1109.00px;text-align:right;">2 Tage</div>
<div class="t" style="top:479.19px;font-size:26px;color:#000;font-weight:normal;right:1784.00px;text-align:right;">24</div>
<svg class="r" style="left:86.50px;top:479.50px;" width="24" height="24" viewBox="0 0 24 24"><path d="M10.8,0.9 L3.5,0.9 Q1.4,0.9 1.4,3 L1.4,16" fill="none" stroke="#000" stroke-width="1.6"/><path d="M6.6,20.8 L19,20.8 Q21.25,20.8 21.25,18.6 L21.25,7.35" fill="none" stroke="#000" stroke-width="1.6"/><path d="M1.2,20.8 L3.6,15.3 L6.9,18.2 Z" fill="#000"/><path d="M5.2,14 L15,4.8 L17.6,7.9 L8.6,16.8 Z" fill="#000"/><path d="M8.9,7.2 L14.1,2.1 L17.3,2.5" fill="none" stroke="#000" stroke-width="1.9"/><circle cx="18.8" cy="3.8" r="2.3" fill="#000"/></svg>
<svg class="r" style="left:235.00px;top:479.50px;" width="19" height="23" viewBox="0 0 19 23"><path d="M1.5,2.3 L15.2,11 L1.5,19.7 Z" fill="none" stroke="#000" stroke-width="2.2" stroke-linejoin="miter"/></svg>
<div class="t" style="top:479.86px;font-size:25.2px;color:#000;font-weight:normal;left:265.50px;">Bugs beheben</div>
<div class="t" style="top:479.86px;font-size:25.2px;color:#000;font-weight:normal;right:1109.00px;text-align:right;">3 Tage</div>
<div class="t" style="top:524.19px;font-size:26px;color:#000;font-weight:normal;right:1784.00px;text-align:right;">25</div>
<svg class="r" style="left:86.50px;top:524.50px;" width="24" height="24" viewBox="0 0 24 24"><path d="M10.8,0.9 L3.5,0.9 Q1.4,0.9 1.4,3 L1.4,16" fill="none" stroke="#000" stroke-width="1.6"/><path d="M6.6,20.8 L19,20.8 Q21.25,20.8 21.25,18.6 L21.25,7.35" fill="none" stroke="#000" stroke-width="1.6"/><path d="M1.2,20.8 L3.6,15.3 L6.9,18.2 Z" fill="#000"/><path d="M5.2,14 L15,4.8 L17.6,7.9 L8.6,16.8 Z" fill="#000"/><path d="M8.9,7.2 L14.1,2.1 L17.3,2.5" fill="none" stroke="#000" stroke-width="1.9"/><circle cx="18.8" cy="3.8" r="2.3" fill="#000"/></svg>
<svg class="r" style="left:210.00px;top:524.50px;" width="19" height="23" viewBox="0 0 19 23"><path d="M1.5,2.3 L15.2,11 L1.5,19.7 Z" fill="none" stroke="#000" stroke-width="2.2" stroke-linejoin="miter"/></svg>
<div class="t" style="top:524.86px;font-size:25.2px;color:#000;font-weight:normal;left:240.50px;">Produktion abgeschlossen</div>
<div class="t" style="top:615.19px;font-size:26px;color:#000;font-weight:normal;right:1784.00px;text-align:right;">27</div>
<svg class="r" style="left:86.50px;top:615.50px;" width="24" height="24" viewBox="0 0 24 24"><path d="M10.8,0.9 L3.5,0.9 Q1.4,0.9 1.4,3 L1.4,16" fill="none" stroke="#000" stroke-width="1.6"/><path d="M6.6,20.8 L19,20.8 Q21.25,20.8 21.25,18.6 L21.25,7.35" fill="none" stroke="#000" stroke-width="1.6"/><path d="M1.2,20.8 L3.6,15.3 L6.9,18.2 Z" fill="#000"/><path d="M5.2,14 L15,4.8 L17.6,7.9 L8.6,16.8 Z" fill="#000"/><path d="M8.9,7.2 L14.1,2.1 L17.3,2.5" fill="none" stroke="#000" stroke-width="1.9"/><circle cx="18.8" cy="3.8" r="2.3" fill="#000"/></svg>
<svg class="r" style="left:235.00px;top:615.50px;" width="19" height="23" viewBox="0 0 19 23"><path d="M1.5,2.3 L15.2,11 L1.5,19.7 Z" fill="none" stroke="#000" stroke-width="2.2" stroke-linejoin="miter"/></svg>
<div class="t" style="top:615.86px;font-size:25.2px;color:#000;font-weight:normal;left:265.50px;">Wartungsplan festlegen</div>
<div class="t" style="top:615.86px;font-size:25.2px;color:#000;font-weight:normal;right:1109.00px;text-align:right;">1 Tag</div>
<div class="t" style="top:660.79px;font-size:26px;color:#000;font-weight:normal;right:1784.00px;text-align:right;">28</div>
<svg class="r" style="left:86.50px;top:661.10px;" width="24" height="24" viewBox="0 0 24 24"><path d="M10.8,0.9 L3.5,0.9 Q1.4,0.9 1.4,3 L1.4,16" fill="none" stroke="#000" stroke-width="1.6"/><path d="M6.6,20.8 L19,20.8 Q21.25,20.8 21.25,18.6 L21.25,7.35" fill="none" stroke="#000" stroke-width="1.6"/><path d="M1.2,20.8 L3.6,15.3 L6.9,18.2 Z" fill="#000"/><path d="M5.2,14 L15,4.8 L17.6,7.9 L8.6,16.8 Z" fill="#000"/><path d="M8.9,7.2 L14.1,2.1 L17.3,2.5" fill="none" stroke="#000" stroke-width="1.9"/><circle cx="18.8" cy="3.8" r="2.3" fill="#000"/></svg>
<svg class="r" style="left:235.00px;top:661.10px;" width="19" height="23" viewBox="0 0 19 23"><path d="M1.5,2.3 L15.2,11 L1.5,19.7 Z" fill="none" stroke="#000" stroke-width="2.2" stroke-linejoin="miter"/></svg>
<div class="t" style="top:661.46px;font-size:25.2px;color:#000;font-weight:normal;left:265.50px;">Projektbeurteilung</div>
<div class="t" style="top:661.46px;font-size:25.2px;color:#000;font-weight:normal;right:1109.00px;text-align:right;">0,5 Tage</div>
<div class="t" style="top:706.19px;font-size:26px;color:#000;font-weight:normal;right:1784.00px;text-align:right;">29</div>
<svg class="r" style="left:86.50px;top:706.50px;" width="24" height="24" viewBox="0 0 24 24"><path d="M10.8,0.9 L3.5,0.9 Q1.4,0.9 1.4,3 L1.4,16" fill="none" stroke="#000" stroke-width="1.6"/><path d="M6.6,20.8 L19,20.8 Q21.25,20.8 21.25,18.6 L21.25,7.35" fill="none" stroke="#000" stroke-width="1.6"/><path d="M1.2,20.8 L3.6,15.3 L6.9,18.2 Z" fill="#000"/><path d="M5.2,14 L15,4.8 L17.6,7.9 L8.6,16.8 Z" fill="#000"/><path d="M8.9,7.2 L14.1,2.1 L17.3,2.5" fill="none" stroke="#000" stroke-width="1.9"/><circle cx="18.8" cy="3.8" r="2.3" fill="#000"/></svg>
<svg class="r" style="left:235.00px;top:706.50px;" width="19" height="23" viewBox="0 0 19 23"><path d="M1.5,2.3 L15.2,11 L1.5,19.7 Z" fill="none" stroke="#000" stroke-width="2.2" stroke-linejoin="miter"/></svg>
<div class="t" style="top:706.86px;font-size:25.2px;color:#000;font-weight:normal;left:265.50px;">Finale Präsentation</div>
<div class="t" style="top:706.86px;font-size:25.2px;color:#000;font-weight:normal;right:1109.00px;text-align:right;">0,5 Tage</div>
<div class="t" style="top:751.19px;font-size:26px;color:#000;font-weight:normal;right:1784.00px;text-align:right;">30</div>
<svg class="r" style="left:86.50px;top:751.50px;" width="24" height="24" viewBox="0 0 24 24"><path d="M10.8,0.9 L3.5,0.9 Q1.4,0.9 1.4,3 L1.4,16" fill="none" stroke="#000" stroke-width="1.6"/><path d="M6.6,20.8 L19,20.8 Q21.25,20.8 21.25,18.6 L21.25,7.35" fill="none" stroke="#000" stroke-width="1.6"/><path d="M1.2,20.8 L3.6,15.3 L6.9,18.2 Z" fill="#000"/><path d="M5.2,14 L15,4.8 L17.6,7.9 L8.6,16.8 Z" fill="#000"/><path d="M8.9,7.2 L14.1,2.1 L17.3,2.5" fill="none" stroke="#000" stroke-width="1.9"/><circle cx="18.8" cy="3.8" r="2.3" fill="#000"/></svg>
<svg class="r" style="left:210.00px;top:751.50px;" width="19" height="23" viewBox="0 0 19 23"><path d="M1.5,2.3 L15.2,11 L1.5,19.7 Z" fill="none" stroke="#000" stroke-width="2.2" stroke-linejoin="miter"/></svg>
<div class="t" style="top:751.86px;font-size:25.2px;color:#000;font-weight:normal;left:240.50px;">Post-Produktion</div>
<div class="t" style="top:781.86px;font-size:25.2px;color:#000;font-weight:normal;left:240.50px;">abgeschlossen</div>
<div class="t" style="top:569.79px;font-size:26px;color:#c7c7c7;font-weight:bold;right:1784.00px;text-align:right;">26</div>
<svg class="r" style="left:208.00px;top:574.10px;" width="22" height="17" viewBox="0 0 22 17"><path d="M0.5,0.5 L21,0.5 L10.75,16 Z" fill="#c7c7c7"/></svg>
<div class="t" style="top:570.80px;font-size:24.8px;color:#c7c7c7;font-weight:bold;left:240.50px;">Post-Produktion</div>
<div class="clip" style="left:752.2px;top:0px;width:1103.8px;height:1330px;">
<div class="t" style="top:45.01px;font-size:25.5px;color:#000;font-weight:normal;left:-1009.50px;width:2000px;text-align:center;">25</div>
<div class="t" style="top:45.01px;font-size:25.5px;color:#000;font-weight:normal;left:-959.78px;width:2000px;text-align:center;">26</div>
<div class="t" style="top:45.01px;font-size:25.5px;color:#000;font-weight:normal;left:-905.06px;width:2000px;text-align:center;">27</div>
<div class="t" style="top:45.01px;font-size:25.5px;color:#000;font-weight:normal;left:-850.34px;width:2000px;text-align:center;">28</div>
<div class="t" style="top:45.01px;font-size:25.5px;color:#000;font-weight:normal;left:-795.62px;width:2000px;text-align:center;">29</div>
<div class="t" style="top:45.01px;font-size:25.5px;color:#000;font-weight:normal;left:-740.90px;width:2000px;text-align:center;">30</div>
<div class="t" style="top:45.01px;font-size:25.5px;color:#000;font-weight:normal;left:-686.18px;width:2000px;text-align:center;">1</div>
<div class="t" style="top:45.01px;font-size:25.5px;color:#000;font-weight:normal;left:-631.46px;width:2000px;text-align:center;">2</div>
<div class="t" style="top:45.01px;font-size:25.5px;color:#000;font-weight:normal;left:-576.74px;width:2000px;text-align:center;">3</div>
<div class="t" style="top:45.01px;font-size:25.5px;color:#000;font-weight:normal;left:-522.02px;width:2000px;text-align:center;">4</div>
<div class="t" style="top:45.01px;font-size:25.5px;color:#000;font-weight:normal;left:-467.30px;width:2000px;text-align:center;">5</div>
<div class="t" style="top:45.01px;font-size:25.5px;color:#000;font-weight:normal;left:-412.58px;width:2000px;text-align:center;">6</div>
<div class="t" style="top:45.01px;font-size:25.5px;color:#000;font-weight:normal;left:-357.86px;width:2000px;text-align:center;">7</div>
<div class="t" style="top:45.01px;font-size:25.5px;color:#000;font-weight:normal;left:-303.14px;width:2000px;text-align:center;">8</div>
<div class="t" style="top:45.01px;font-size:25.5px;color:#000;font-weight:normal;left:-248.42px;width:2000px;text-align:center;">9</div>
<div class="t" style="top:45.01px;font-size:25.5px;color:#000;font-weight:normal;left:-193.70px;width:2000px;text-align:center;">10</div>
<div class="t" style="top:45.01px;font-size:25.5px;color:#000;font-weight:normal;left:-138.98px;width:2000px;text-align:center;">11</div>
<div class="t" style="top:45.01px;font-size:25.5px;color:#000;font-weight:normal;left:-84.26px;width:2000px;text-align:center;">12</div>
<div class="t" style="top:45.01px;font-size:25.5px;color:#000;font-weight:normal;left:-29.54px;width:2000px;text-align:center;">13</div>
<div class="t" style="top:45.01px;font-size:25.5px;color:#000;font-weight:normal;left:25.18px;width:2000px;text-align:center;">14</div>
<div class="t" style="top:45.01px;font-size:25.5px;color:#000;font-weight:normal;left:79.90px;width:2000px;text-align:center;">15</div>
<div class="t" style="top:8.41px;font-size:25.5px;color:#000;font-weight:normal;right:988.50px;text-align:right;">KW 17, 21. April</div>
<div class="t" style="top:8.41px;font-size:25.5px;color:#000;font-weight:normal;left:-686.20px;width:2000px;text-align:center;">KW 18, 28. April</div>
<div class="t" style="top:8.41px;font-size:25.5px;color:#000;font-weight:normal;left:-303.60px;width:2000px;text-align:center;">KW 19, 5. Mai</div>
<div class="t" style="top:8.41px;font-size:25.5px;color:#000;font-weight:normal;letter-spacing:-0.2px;right:7.50px;text-align:right;">KW 20, 12. Mai</div>
<svg class="r" style="left:0;top:0" width="1104" height="1330" viewBox="778.2 184 1103.80 1330"><rect x="760" y="269.2" width="1200" height="12.6" fill="#d0e0f8" stroke="#5173b2" stroke-width="1.15"/><path d="M760,314.8 L1835,314.8 Q1841.5,314.8 1841.5,321 Q1841.5,325 1838.5,328.2 L1831.4,336.8 L1821,327.6 L760,327.6 Z" fill="#d0e0f8" stroke="#5173b2" stroke-width="1.15"/><path d="M1900,752.8 L1827,752.8 Q1820.8,752.8 1820.8,759 Q1820.8,763 1824,766.5 L1831.6,774.6 L1842,765.4 L1900,765.4 Z" fill="#d0e0f8" stroke="#5173b2" stroke-width="1.15"/><rect x="955.30" y="357.40" width="164.40" height="30.20" rx="7.5" fill="#d0e0f8" stroke="#5173b2" stroke-width="1.15"/><rect x="1119.70" y="418.20" width="81.80" height="30.20" rx="7.5" fill="#d0e0f8" stroke="#5173b2" stroke-width="1.15"/><rect x="1201.50" y="478.40" width="164.20" height="30.00" rx="7.5" fill="#d0e0f8" stroke="#5173b2" stroke-width="1.15"/><rect x="1365.70" y="523.60" width="27.60" height="30.00" rx="7.5" fill="#d0e0f8" stroke="#5173b2" stroke-width="1.15"/><rect x="1393.30" y="569.20" width="54.60" height="30.20" rx="7.5" fill="#d0e0f8" stroke="#5173b2" stroke-width="1.15"/><rect x="1447.90" y="614.40" width="109.60" height="30.00" rx="7.5" fill="#d0e0f8" stroke="#5173b2" stroke-width="1.15"/><rect x="1557.50" y="659.40" width="274.00" height="30.00" rx="7.5" fill="#d0e0f8" stroke="#5173b2" stroke-width="1.15"/><rect x="1831.30" y="795.60" width="128.70" height="30.00" rx="7.5" fill="#d0e0f8" stroke="#5173b2" stroke-width="1.15"/><path d="M1830.9,704.8 L1845.8,719.7 L1830.9,734.6 L1816,719.7 Z" fill="#d0e0f8" stroke="#5173b2" stroke-width="1.15"/><path d="M1119.70,372.50 L1135.20,372.50 Q1139.20,372.50 1139.20,376.50 L1139.20,410.20" fill="none" stroke="#000" stroke-width="1.25"/><path d="M1135.40,409.20 L1143.00,409.20 L1139.20,418.20 Z" fill="#000"/><path d="M1201.50,433.30 L1217.60,433.30 Q1221.60,433.30 1221.60,437.30 L1221.60,470.40" fill="none" stroke="#000" stroke-width="1.25"/><path d="M1217.80,469.40 L1225.40,469.40 L1221.60,478.40 Z" fill="#000"/><path d="M1365.70,493.40 L1381.10,493.40 Q1385.10,493.40 1385.10,497.40 L1385.10,512.10 Q1385.10,516.10 1381.10,516.10 L1344.30,516.10 Q1340.30,516.10 1340.30,520.10 L1340.30,534.60 Q1340.30,538.60 1344.30,538.60 L1357.70,538.60" fill="none" stroke="#000" stroke-width="1.25"/><path d="M1356.70,534.80 L1356.70,542.40 L1365.70,538.60 Z" fill="#000"/><path d="M1393.30,538.60 L1409.20,538.60 Q1413.20,538.60 1413.20,542.60 L1413.20,561.20" fill="none" stroke="#000" stroke-width="1.25"/><path d="M1409.40,560.20 L1417.00,560.20 L1413.20,569.20 Z" fill="#000"/><path d="M1447.90,584.30 L1463.70,584.30 Q1467.70,584.30 1467.70,588.30 L1467.70,606.40" fill="none" stroke="#000" stroke-width="1.25"/><path d="M1463.90,605.40 L1471.50,605.40 L1467.70,614.40 Z" fill="#000"/><path d="M1557.50,629.40 L1573.20,629.40 Q1577.20,629.40 1577.20,633.40 L1577.20,651.40" fill="none" stroke="#000" stroke-width="1.25"/><path d="M1573.40,650.40 L1581.00,650.40 L1577.20,659.40 Z" fill="#000"/><path d="M1841.50,321.20 L1857.30,321.20 Q1861.30,321.20 1861.30,325.20 L1861.30,693.40 Q1861.30,697.40 1857.30,697.40 L1794.30,697.40 Q1790.30,697.40 1790.30,701.40 L1790.30,715.70 Q1790.30,719.70 1794.30,719.70 L1808.00,719.70" fill="none" stroke="#000" stroke-width="1.25"/><path d="M1807.00,715.90 L1807.00,723.50 L1816.00,719.70 Z" fill="#000"/><path d="M1845.80,719.70 L1862.40,719.70 Q1866.40,719.70 1866.40,723.70 L1866.40,738.20 Q1866.40,742.20 1862.40,742.20 L1799.60,742.20 Q1795.60,742.20 1795.60,746.20 L1795.60,755.20 Q1795.60,759.20 1799.60,759.20 L1812.80,759.20" fill="none" stroke="#000" stroke-width="1.25"/><path d="M1811.80,755.40 L1811.80,763.00 L1820.80,759.20 Z" fill="#000"/><path d="M1900.00,833.80 L1864.90,833.80 Q1860.90,833.80 1860.90,837.80 L1860.90,852.00 Q1860.90,856.00 1864.90,856.00 L1875.50,856.00" fill="none" stroke="#000" stroke-width="1.25"/><path d="M1874.50,852.20 L1874.50,859.80 L1883.50,856.00 Z" fill="#000"/></svg>
<div class="t" style="top:179.20px;font-size:21.5px;color:#000;font-weight:normal;right:941.50px;text-align:right;">Kundenprüfung</div>
<div class="t" style="top:179.20px;font-size:21.5px;color:#000;font-weight:normal;left:375.60px;">Kunde</div>
<div class="t" style="top:239.55px;font-size:21.5px;color:#000;font-weight:normal;right:777.20px;text-align:right;">Produktion der finalen Webseite</div>
<div class="t" style="top:239.55px;font-size:21.5px;color:#000;font-weight:normal;left:457.80px;">Designer; Entwickler</div>
<div class="t" style="top:299.95px;font-size:21.5px;color:#000;font-weight:normal;right:695.00px;text-align:right;">Betatest</div>
<div class="t" style="top:299.95px;font-size:21.5px;color:#000;font-weight:normal;left:620.40px;">Produktmanager; Kunde</div>
<div class="t" style="top:345.20px;font-size:21.5px;color:#000;font-weight:normal;right:555.40px;text-align:right;">Usability-Tests</div>
<div class="t" style="top:345.20px;font-size:21.5px;color:#000;font-weight:normal;left:648.90px;">Produktmanager; Kunde</div>
<div class="t" style="top:390.60px;font-size:21.5px;color:#000;font-weight:normal;right:503.30px;text-align:right;">Style Guide erstellen</div>
<div class="t" style="top:390.60px;font-size:21.5px;color:#000;font-weight:normal;left:703.90px;">Designer; Produktmanager</div>
<div class="t" style="top:436.00px;font-size:21.5px;color:#000;font-weight:normal;right:449.00px;text-align:right;">Browser-Tests</div>
<div class="t" style="top:436.00px;font-size:21.5px;color:#000;font-weight:normal;left:813.50px;">Produktmanager</div>
<div class="t" style="top:481.20px;font-size:21.5px;color:#000;font-weight:normal;right:339.40px;text-align:right;">Bugs beheben</div>
<div class="t" style="top:481.20px;font-size:21.5px;color:#000;font-weight:normal;left:1096.00px;">Entwickler</div>
<div class="t" style="top:526.50px;font-size:21.5px;color:#000;font-weight:normal;right:105.40px;text-align:right;">Produktion abgeschlossen</div>
<div class="t" style="top:572.00px;font-size:21.5px;color:#c4c4c4;font-weight:normal;right:100.50px;text-align:right;">Post-Produktion</div>
<div class="t" style="top:617.50px;font-size:21.5px;color:#000;font-weight:normal;right:65.50px;text-align:right;">Wartungsplan festlegen</div>
<div class="t" style="top:663.00px;font-size:21.5px;color:#000;font-weight:normal;right:35.20px;text-align:right;">Projektbeurteilung</div>
<div class="t" style="top:708.20px;font-size:21.5px;color:#000;font-weight:normal;right:8.00px;text-align:right;">Finale Präsentation</div>
<div class="t" style="top:769.20px;font-size:21.5px;color:#000;font-weight:normal;right:9.00px;text-align:right;">Post-Produktion abgeschlossen</div>
</div>
</div>
<div class="r" style="left:26.00px;top:259.00px;width:1.00px;height:1255.00px;background:rgba(255,255,255,0.85);"></div>
<div class="r" style="left:1881.00px;top:259.00px;width:1.00px;height:1255.00px;background:rgba(255,255,255,0.85);"></div>
<div class="r" style="left:1904px;top:184px;width:578px;height:1321px;background:#3c3c3c;border-radius:9px;overflow:hidden;">
<div class="t" style="top:9.73px;font-size:23px;color:#c9c9c9;font-weight:bold;letter-spacing:0.1px;left:15.50px;">Eingebaut</div>
<div class="r" style="left:15.799999999999955px;top:47.5px;width:25.5px;height:25.5px;box-sizing:border-box;border:2px solid #ececec;border-radius:4.5px;"></div>
<div class="t" style="top:50.23px;font-size:23px;color:#e8e8e8;font-weight:normal;letter-spacing:0.2px;left:58.00px;-webkit-text-stroke:0.3px #e8e8e8;">Auf kritischem Pfad</div>
<div class="r" style="left:15.799999999999955px;top:87.5px;width:25.5px;height:25.5px;box-sizing:border-box;border:2px solid #ececec;border-radius:4.5px;"></div>
<div class="t" style="top:90.23px;font-size:23px;color:#e8e8e8;font-weight:normal;letter-spacing:0.2px;left:58.00px;-webkit-text-stroke:0.3px #e8e8e8;">Begonnen</div>
<div class="r" style="left:15.799999999999955px;top:127.5px;width:25.5px;height:25.5px;box-sizing:border-box;border:2px solid #ececec;border-radius:4.5px;"></div>
<div class="t" style="top:130.23px;font-size:23px;color:#e8e8e8;font-weight:normal;letter-spacing:0.2px;left:58.00px;-webkit-text-stroke:0.3px #e8e8e8;">Diese Woche</div>
<div class="r" style="left:15.799999999999955px;top:167.5px;width:25.5px;height:25.5px;box-sizing:border-box;border:2px solid #ececec;border-radius:4.5px;"></div>
<div class="t" style="top:170.23px;font-size:23px;color:#e8e8e8;font-weight:normal;letter-spacing:0.2px;left:58.00px;-webkit-text-stroke:0.3px #e8e8e8;">Dieser Monat</div>
<div class="r" style="left:15.799999999999955px;top:207.5px;width:25.5px;height:25.5px;box-sizing:border-box;border:2px solid #ececec;border-radius:4.5px;"></div>
<div class="t" style="top:210.23px;font-size:23px;color:#e8e8e8;font-weight:normal;letter-spacing:0.2px;left:58.00px;-webkit-text-stroke:0.3px #e8e8e8;">Erledigt</div>
<div class="r" style="left:15.799999999999955px;top:247.5px;width:25.5px;height:25.5px;box-sizing:border-box;border:2px solid #ececec;border-radius:4.5px;"></div>
<div class="t" style="top:250.23px;font-size:23px;color:#e8e8e8;font-weight:normal;letter-spacing:0.2px;left:58.00px;-webkit-text-stroke:0.3px #e8e8e8;">Gruppen</div>
<div class="r" style="left:15.799999999999955px;top:287.5px;width:25.5px;height:25.5px;box-sizing:border-box;border:2px solid #ececec;border-radius:4.5px;"></div>
<div class="t" style="top:290.23px;font-size:23px;color:#e8e8e8;font-weight:normal;letter-spacing:0.2px;left:58.00px;-webkit-text-stroke:0.3px #e8e8e8;">Gruppen Oberste Ebene</div>
<div class="r" style="left:15.799999999999955px;top:327.5px;width:25.5px;height:25.5px;box-sizing:border-box;border:2px solid #ececec;border-radius:4.5px;"></div>
<div class="t" style="top:330.23px;font-size:23px;color:#e8e8e8;font-weight:normal;letter-spacing:0.2px;left:58.00px;-webkit-text-stroke:0.3px #e8e8e8;">Gruppen ohne Meilensteine</div>
<div class="r" style="left:15.799999999999955px;top:367.5px;width:25.5px;height:25.5px;box-sizing:border-box;border:2px solid #ececec;border-radius:4.5px;"></div>
<div class="t" style="top:370.23px;font-size:23px;color:#e8e8e8;font-weight:normal;letter-spacing:0.2px;left:58.00px;-webkit-text-stroke:0.3px #e8e8e8;">Heute</div>
<div class="r" style="left:15.799999999999955px;top:407.5px;width:25.5px;height:25.5px;box-sizing:border-box;border:2px solid #ececec;border-radius:4.5px;"></div>
<div class="t" style="top:410.23px;font-size:23px;color:#e8e8e8;font-weight:normal;letter-spacing:0.2px;left:58.00px;-webkit-text-stroke:0.3px #e8e8e8;">Hinter Zeitplan</div>
<div class="r" style="left:15.799999999999955px;top:447.5px;width:25.5px;height:25.5px;box-sizing:border-box;border:2px solid #ececec;border-radius:4.5px;"></div>
<div class="t" style="top:450.23px;font-size:23px;color:#e8e8e8;font-weight:normal;letter-spacing:0.2px;left:58.00px;-webkit-text-stroke:0.3px #e8e8e8;">Im Plan</div>
<div class="r" style="left:15.799999999999955px;top:487.5px;width:25.5px;height:25.5px;box-sizing:border-box;border:2px solid #ececec;border-radius:4.5px;"></div>
<div class="t" style="top:490.23px;font-size:23px;color:#e8e8e8;font-weight:normal;letter-spacing:0.2px;left:58.00px;-webkit-text-stroke:0.3px #e8e8e8;">Kosten über Budget</div>
<div class="r" style="left:15.799999999999955px;top:527.5px;width:25.5px;height:25.5px;box-sizing:border-box;border:2px solid #ececec;border-radius:4.5px;"></div>
<div class="t" style="top:530.23px;font-size:23px;color:#e8e8e8;font-weight:normal;letter-spacing:0.2px;left:58.00px;-webkit-text-stroke:0.3px #e8e8e8;">Laufend</div>
<div class="r" style="left:15.799999999999955px;top:567.5px;width:25.5px;height:25.5px;box-sizing:border-box;border:2px solid #ececec;border-radius:4.5px;"></div>
<div class="t" style="top:570.23px;font-size:23px;color:#e8e8e8;font-weight:normal;letter-spacing:0.2px;left:58.00px;-webkit-text-stroke:0.3px #e8e8e8;">Leicht hinter Plan</div>
<div class="r" style="left:15.799999999999955px;top:607.5px;width:25.5px;height:25.5px;box-sizing:border-box;border:2px solid #ececec;border-radius:4.5px;"></div>
<div class="t" style="top:610.23px;font-size:23px;color:#e8e8e8;font-weight:normal;letter-spacing:0.2px;left:58.00px;-webkit-text-stroke:0.3px #e8e8e8;">Meilensteine</div>
<div class="r" style="left:15.799999999999955px;top:647.5px;width:25.5px;height:25.5px;box-sizing:border-box;border:2px solid #ececec;border-radius:4.5px;"></div>
<div class="t" style="top:650.23px;font-size:23px;color:#e8e8e8;font-weight:normal;letter-spacing:0.2px;left:58.00px;-webkit-text-stroke:0.3px #e8e8e8;">Meilensteine erledigt</div>
<div class="r" style="left:15.799999999999955px;top:687.5px;width:25.5px;height:25.5px;box-sizing:border-box;border:2px solid #ececec;border-radius:4.5px;"></div>
<div class="t" style="top:690.23px;font-size:23px;color:#e8e8e8;font-weight:normal;letter-spacing:0.2px;left:58.00px;-webkit-text-stroke:0.3px #e8e8e8;">Meilensteine hinter Plan</div>
<div class="r" style="left:15.799999999999955px;top:727.5px;width:25.5px;height:25.5px;box-sizing:border-box;border:2px solid #ececec;border-radius:4.5px;"></div>
<div class="t" style="top:730.23px;font-size:23px;color:#e8e8e8;font-weight:normal;letter-spacing:0.2px;left:58.00px;-webkit-text-stroke:0.3px #e8e8e8;">Mit Anhängen</div>
<div class="r" style="left:15.799999999999955px;top:767.5px;width:25.5px;height:25.5px;box-sizing:border-box;border:2px solid #ececec;border-radius:4.5px;"></div>
<div class="t" style="top:770.23px;font-size:23px;color:#e8e8e8;font-weight:normal;letter-spacing:0.2px;left:58.00px;-webkit-text-stroke:0.3px #e8e8e8;">Mit Ressourcen</div>
<div class="r" style="left:15.799999999999955px;top:807.5px;width:25.5px;height:25.5px;box-sizing:border-box;border:2px solid #ececec;border-radius:4.5px;"></div>
<div class="t" style="top:810.23px;font-size:23px;color:#e8e8e8;font-weight:normal;letter-spacing:0.2px;left:58.00px;-webkit-text-stroke:0.3px #e8e8e8;">Morgen</div>
<div class="r" style="left:15.799999999999955px;top:847.5px;width:25.5px;height:25.5px;box-sizing:border-box;border:2px solid #ececec;border-radius:4.5px;"></div>
<div class="t" style="top:850.23px;font-size:23px;color:#e8e8e8;font-weight:normal;letter-spacing:0.2px;left:58.00px;-webkit-text-stroke:0.3px #e8e8e8;">Nächste Woche</div>
<div class="r" style="left:15.799999999999955px;top:887.5px;width:25.5px;height:25.5px;box-sizing:border-box;border:2px solid #ececec;border-radius:4.5px;"></div>
<div class="t" style="top:890.23px;font-size:23px;color:#e8e8e8;font-weight:normal;letter-spacing:0.2px;left:58.00px;-webkit-text-stroke:0.3px #e8e8e8;">Nächster Monat</div>
<svg class="r" style="left:15.80px;top:887.50px;" width="25" height="25" viewBox="0 0 25 25"><polyline points="5.2,12.8 11,18.6 19.6,5.6" fill="none" stroke="#efefef" stroke-width="3.5" stroke-linecap="round" stroke-linejoin="round"/></svg>
<div class="r" style="left:15.799999999999955px;top:927.5px;width:25.5px;height:25.5px;box-sizing:border-box;border:2px solid #ececec;border-radius:4.5px;"></div>
<div class="t" style="top:930.23px;font-size:23px;color:#e8e8e8;font-weight:normal;letter-spacing:0.2px;left:58.00px;-webkit-text-stroke:0.3px #e8e8e8;">Nicht begonnen</div>
<div class="r" style="left:15.799999999999955px;top:967.5px;width:25.5px;height:25.5px;box-sizing:border-box;border:2px solid #ececec;border-radius:4.5px;"></div>
<div class="t" style="top:970.23px;font-size:23px;color:#e8e8e8;font-weight:normal;letter-spacing:0.2px;left:58.00px;-webkit-text-stroke:0.3px #e8e8e8;">Oberste Ebene</div>
<div class="r" style="left:15.799999999999955px;top:1007.5px;width:25.5px;height:25.5px;box-sizing:border-box;border:2px solid #ececec;border-radius:4.5px;"></div>
<div class="t" style="top:1010.23px;font-size:23px;color:#e8e8e8;font-weight:normal;letter-spacing:0.2px;left:58.00px;-webkit-text-stroke:0.3px #e8e8e8;">Persönliche Aufgaben</div>
<div class="r" style="left:15.799999999999955px;top:1047.5px;width:25.5px;height:25.5px;box-sizing:border-box;border:2px solid #ececec;border-radius:4.5px;"></div>
<div class="t" style="top:1050.23px;font-size:23px;color:#e8e8e8;font-weight:normal;letter-spacing:0.2px;left:58.00px;-webkit-text-stroke:0.3px #e8e8e8;">Persönliche Aufgaben dieser Woche</div>
<div class="r" style="left:15.799999999999955px;top:1087.5px;width:25.5px;height:25.5px;box-sizing:border-box;border:2px solid #ececec;border-radius:4.5px;"></div>
<div class="t" style="top:1090.23px;font-size:23px;color:#e8e8e8;font-weight:normal;letter-spacing:0.2px;left:58.00px;-webkit-text-stroke:0.3px #e8e8e8;">Unerledigt</div>
<div class="r" style="left:15.799999999999955px;top:1127.5px;width:25.5px;height:25.5px;box-sizing:border-box;border:2px solid #ececec;border-radius:4.5px;"></div>
<div class="t" style="top:1130.23px;font-size:23px;color:#e8e8e8;font-weight:normal;letter-spacing:0.2px;left:58.00px;-webkit-text-stroke:0.3px #e8e8e8;">Vorgänge</div>
<div class="r" style="left:15.799999999999955px;top:1167.5px;width:25.5px;height:25.5px;box-sizing:border-box;border:2px solid #ececec;border-radius:4.5px;"></div>
<div class="t" style="top:1170.23px;font-size:23px;color:#e8e8e8;font-weight:normal;letter-spacing:0.2px;left:58.00px;-webkit-text-stroke:0.3px #e8e8e8;">Vorgangs-Spanne</div>
<div class="r" style="left:15.799999999999955px;top:1207.5px;width:25.5px;height:25.5px;box-sizing:border-box;border:2px solid #ececec;border-radius:4.5px;"></div>
<div class="t" style="top:1210.23px;font-size:23px;color:#e8e8e8;font-weight:normal;letter-spacing:0.2px;left:58.00px;-webkit-text-stroke:0.3px #e8e8e8;">Wurzelvorgang</div>
<div class="r" style="left:15.799999999999955px;top:1247.5px;width:25.5px;height:25.5px;box-sizing:border-box;border:2px solid #ececec;border-radius:4.5px;"></div>
<div class="t" style="top:1250.23px;font-size:23px;color:#e8e8e8;font-weight:normal;letter-spacing:0.2px;left:58.00px;-webkit-text-stroke:0.3px #e8e8e8;">Zukünftig</div>
<div class="r" style="left:0.00px;top:1280.00px;width:578.00px;height:41.00px;background:#464646;border:1px solid #2c2c2c;border-radius:0 0 9px 9px;box-sizing:border-box;"></div>
</div>
<div class="r" style="left:1926.00px;top:1484.50px;width:23.50px;height:2.00px;background:#e0e0e0;"></div>
<div class="r" style="left:1936.75px;top:1473.75px;width:2.00px;height:23.50px;background:#e0e0e0;"></div>
<svg class="r" style="left:1993.00px;top:1468.00px;" width="28" height="32" viewBox="0 0 28 32"><path d="M16.5,6.5 A10,10 0 1 0 22.5,11" fill="none" stroke="#9a9a9a" stroke-width="2.2"/><path d="M13,1.5 L20.5,6.5 L13,11.5 Z" fill="#9a9a9a"/></svg>
<svg class="r" style="left:2424.00px;top:1470.00px;" width="30" height="30" viewBox="0 0 30 30"><circle cx="15" cy="15" r="10.5" fill="#9a9a9a"/><rect x="12.25" y="1" width="5.5" height="14" fill="#9a9a9a" transform="rotate(0.0 15 15)"/><rect x="12.25" y="1" width="5.5" height="14" fill="#9a9a9a" transform="rotate(45.0 15 15)"/><rect x="12.25" y="1" width="5.5" height="14" fill="#9a9a9a" transform="rotate(90.0 15 15)"/><rect x="12.25" y="1" width="5.5" height="14" fill="#9a9a9a" transform="rotate(135.0 15 15)"/><rect x="12.25" y="1" width="5.5" height="14" fill="#9a9a9a" transform="rotate(180.0 15 15)"/><rect x="12.25" y="1" width="5.5" height="14" fill="#9a9a9a" transform="rotate(225.0 15 15)"/><rect x="12.25" y="1" width="5.5" height="14" fill="#9a9a9a" transform="rotate(270.0 15 15)"/><rect x="12.25" y="1" width="5.5" height="14" fill="#9a9a9a" transform="rotate(315.0 15 15)"/><circle cx="15" cy="15" r="4.5" fill="#464646"/></svg>
<svg class="r" style="left:2451.00px;top:1485.00px;" width="16" height="14" viewBox="0 0 16 14"><polyline points="2,3 7.5,10 13,3" fill="none" stroke="#9a9a9a" stroke-width="2"/></svg>
<svg class="r" style="left:1376.00px;top:106.00px;" width="266" height="98" viewBox="0 0 266 98"><ellipse cx="133" cy="49" rx="130" ry="46" fill="none" stroke="#d9462d" stroke-width="3.1"/></svg>
<svg class="r" style="left:1906.00px;top:1059.00px;" width="54" height="54" viewBox="0 0 54 54"><circle cx="27" cy="27" r="23.5" fill="none" stroke="#d9462d" stroke-width="3"/></svg>
</body></html>
